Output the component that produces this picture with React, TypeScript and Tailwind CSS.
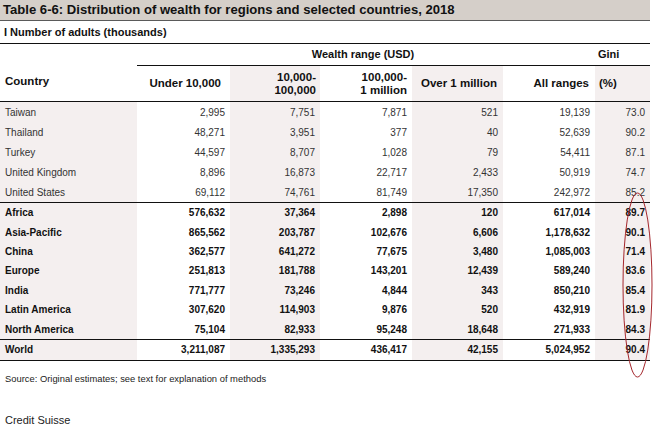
import React from "react";

const cols = "grid grid-cols-[137px_93px_90px_92px_91px_92px_55px]";
const shade = "bg-[#f4efef]";

type Row = [string, string, string, string, string, string, string];

const countries: Row[] = [
  ["Taiwan", "2,995", "7,751", "7,871", "521", "19,139", "73.0"],
  ["Thailand", "48,271", "3,951", "377", "40", "52,639", "90.2"],
  ["Turkey", "44,597", "8,707", "1,028", "79", "54,411", "87.1"],
  ["United Kingdom", "8,896", "16,873", "22,717", "2,433", "50,919", "74.7"],
  ["United States", "69,112", "74,761", "81,749", "17,350", "242,972", "85.2"],
];

const regions: Row[] = [
  ["Africa", "576,632", "37,364", "2,898", "120", "617,014", "89.7"],
  ["Asia-Pacific", "865,562", "203,787", "102,676", "6,606", "1,178,632", "90.1"],
  ["China", "362,577", "641,272", "77,675", "3,480", "1,085,003", "71.4"],
  ["Europe", "251,813", "181,788", "143,201", "12,439", "589,240", "83.6"],
  ["India", "771,777", "73,246", "4,844", "343", "850,210", "85.4"],
  ["Latin America", "307,620", "114,903", "9,876", "520", "432,919", "81.9"],
  ["North America", "75,104", "82,933", "95,248", "18,648", "271,933", "84.3"],
];

const world: Row = ["World", "3,211,087", "1,335,293", "436,417", "42,155", "5,024,952", "90.4"];

function DataRow({ row, bold, h }: { row: Row; bold?: boolean; h: string }) {
  const txt = bold ? "font-bold text-[#111]" : "text-[#333]";
  return (
    <div className={`${cols} ${h} text-[10px] ${txt}`}>
      {row.map((c, i) => (
        <div
          key={i}
          className={`flex items-center ${i === 0 ? "pl-[5px]" : "justify-end pr-[5px]"} ${
            i % 2 === 0 ? shade : ""
          }`}
        >
          {c}
        </div>
      ))}
    </div>
  );
}

export default function App() {
  return (
    <div className="w-[657px] h-[432px] bg-white font-['Liberation_Sans',Arial,sans-serif] text-[#111]">
      <div className="relative w-[650px]">
        {/* Title */}
        <div className="h-[21px] bg-[#d5cfc9] border-b border-[#5a5a5a] flex items-center pl-[3px] text-[13.1px] font-bold text-[#111]">
          Table 6-6: Distribution of wealth for regions and selected countries, 2018
        </div>
        {/* Subtitle */}
        <div className="h-[23px] border-b border-[#111] flex items-center pl-[4px] text-[11px] font-bold">
          I Number of adults (thousands)
        </div>
        {/* Header row 1 */}
        <div className={`${cols} h-[22px] text-[11px] font-bold`}>
          <div />
          <div className="col-span-5 border-b border-[#111] flex items-center justify-center pr-[6px]">
            Wealth range (USD)
          </div>
          <div className="border-b border-[#111] flex items-center pl-[3px]">Gini</div>
        </div>
        {/* Header row 2 */}
        <div className={`${cols} h-[36px] border-b border-[#111] text-[11.5px] font-bold leading-[13px]`}>
          <div className="flex items-center pl-[5px] pb-[5px]">Country</div>
          <div className="flex items-center justify-end pr-[9px]">Under 10,000</div>
          <div className={`flex items-center justify-end text-right pr-[4px] ${shade}`}>
            10,000-
            <br />
            100,000
          </div>
          <div className="flex items-center justify-end text-right pr-[5px]">
            100,000-
            <br />1 million
          </div>
          <div className={`flex items-center justify-end pr-[6px] ${shade}`}>Over 1 million</div>
          <div className="flex items-center justify-end pr-[6px]">All ranges</div>
          <div className={`flex items-center pl-[4px] ${shade}`}>(%)</div>
        </div>
        {/* Countries */}
        <div className="border-b border-[#111]">
          {countries.map((r) => (
            <DataRow key={r[0]} row={r} h="h-[20px]" />
          ))}
        </div>
        {/* Regions */}
        <div className="border-b border-[#111]">
          {regions.map((r) => (
            <DataRow key={r[0]} row={r} bold h="h-[19.4px]" />
          ))}
        </div>
        <div className="border-b border-[#111]">
          <DataRow row={world} bold h="h-[20px]" />
        </div>

        {/* Red ellipse annotation */}
        <svg
          className="absolute left-[618px] top-[190px] pointer-events-none"
          width="40"
          height="192"
          viewBox="0 0 40 192"
        >
          <ellipse cx="19.5" cy="95" rx="14.5" ry="92" fill="none" stroke="#a4262c" strokeWidth="1" />
        </svg>

        {/* Footer */}
        <div className="mt-[12px] pl-[5px] text-[9.4px] text-[#222] leading-[11px]">
          Source: Original estimates; see text for explanation of methods
        </div>
        <div className="mt-[30px] pl-[5px] text-[11px] text-[#222] leading-[13px]">Credit Suisse</div>
      </div>
    </div>
  );
}
